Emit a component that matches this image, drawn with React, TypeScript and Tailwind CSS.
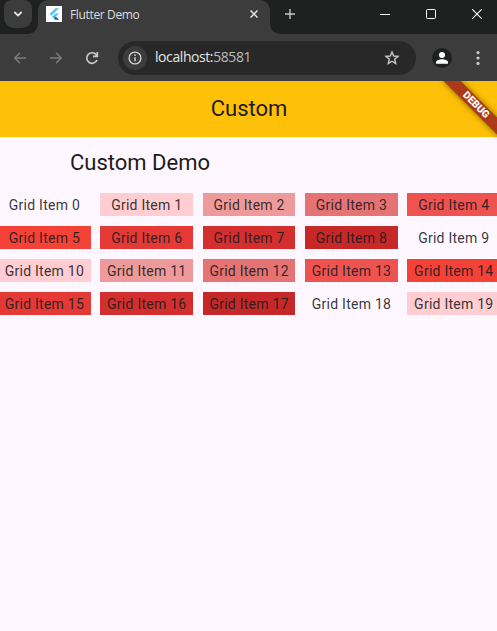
const shades = [
  'bg-transparent',
  'bg-[#ffcdd2]',
  'bg-[#ef9a9a]',
  'bg-[#e57373]',
  'bg-[#ef5350]',
  'bg-[#f44336]',
  'bg-[#e53935]',
  'bg-[#d32f2f]',
  'bg-[#c62828]',
];

function FlutterLogo() {
  return (
    <span className="flex h-4 w-4 shrink-0 items-center justify-center bg-white">
      <svg width="12" height="14" viewBox="0 0 12 14">
        <path d="M7.4 1.2H11L3.4 8.8L1.6 7Z" fill="#54c5f8" />
        <path d="M7.4 6.5H11L7.8 9.7L6 8Z" fill="#54c5f8" />
        <path d="M4.2 9.8L6 8L7.8 9.8L6 11.6Z" fill="#29b6f6" />
        <path d="M6 11.6L7.8 9.8L11 12.8H7.4Z" fill="#01579b" />
      </svg>
    </span>
  );
}

function TabStrip() {
  return (
    <div className="flex h-[34px]">
      <div className="w-[38px] shrink-0 rounded-br-[10px] bg-[#1f2120] pl-1">
        <div className="flex h-7 w-7 items-center justify-center rounded-t-[8px] rounded-b-[10px] bg-[#3c3c3c]">
          <svg width="10" height="6" viewBox="0 0 10 6" fill="none" stroke="#e8e8e8" strokeWidth="1.8">
            <path d="M1.4 1L5 4.6L8.6 1" />
          </svg>
        </div>
      </div>
      <div className="w-[232px] shrink-0 bg-[#1f2120]">
        <div className="flex h-full items-start rounded-t-[10px] bg-[#3c3c3c] pt-1.5 pl-2">
          <FlutterLogo />
          <span className="ml-2 w-[180px] font-['Open_Sans',sans-serif] text-[12px] leading-[18px] tracking-[-0.35px] text-[#dedede]">
            Flutter Demo
          </span>
          <svg className="mt-1" width="8" height="8" viewBox="0 0 8 8" stroke="#e3e3e3" strokeWidth="1.5">
            <path d="M0.5 0.5L7.5 7.5M7.5 0.5L0.5 7.5" />
          </svg>
        </div>
      </div>
      <div className="flex flex-1 items-start rounded-bl-[10px] bg-[#1f2120] pt-[9px] pl-[15px]">
        <svg width="10" height="10" viewBox="0 0 10 10" stroke="#c7c7c7" strokeWidth="1.4">
          <path d="M5 0V10M0 5H10" />
        </svg>
        <svg className="ml-[85px]" width="10" height="10" viewBox="0 0 10 10" stroke="#ffffff">
          <path d="M0 5.5H10" />
        </svg>
        <svg className="ml-9" width="10" height="10" viewBox="0 0 10 10" fill="none" stroke="#ffffff">
          <rect x="0.5" y="0.5" width="9" height="9" rx="1" />
        </svg>
        <svg className="ml-9" width="10" height="10" viewBox="0 0 10 10" stroke="#ffffff" strokeWidth="1.1">
          <path d="M0 0L10 10M10 0L0 10" />
        </svg>
      </div>
    </div>
  );
}

function Toolbar() {
  return (
    <div className="flex h-[47px] items-center pl-3">
      <svg width="16" height="16" viewBox="0 0 16 16" fill="none" stroke="#7d7d7d" strokeWidth="1.5">
        <path d="M14 8H3.2M8 2.8L2.8 8L8 13.2" />
      </svg>
      <svg className="ml-5" width="16" height="16" viewBox="0 0 16 16" fill="none" stroke="#7d7d7d" strokeWidth="1.5">
        <path d="M2 8H12.8M8 2.8L13.2 8L8 13.2" />
      </svg>
      <svg className="ml-5" width="16" height="16" viewBox="0 0 16 16" fill="none" stroke="#c9c9c9" strokeWidth="1.7">
        <path d="M13 10A5.3 5.3 0 1 1 12.2 4.7L13.2 5.8M13.3 2V6.4H9" />
      </svg>
      <div className="ml-[18px] flex h-[34px] w-[298px] shrink-0 items-center rounded-full bg-[#282828] pl-[5px]">
        <span className="flex h-6 w-6 items-center justify-center rounded-full bg-[#3c3c3c]">
          <svg width="14" height="14" viewBox="0 0 14 14" fill="none" stroke="#d5d5d5" strokeWidth="1.3">
            <circle cx="7" cy="7" r="5.9" />
            <path d="M7 6.2V10.2M7 3.6V5" strokeWidth="1.5" />
          </svg>
        </span>
        <span className="ml-2 w-[229px] pb-px font-['Open_Sans',sans-serif] text-[14px] leading-5 tracking-[-0.42px] text-[#e5e5e5]">
          localhost:<span className="text-[#bdbdbd]">58581</span>
        </span>
        <svg width="16" height="16" viewBox="0 0 16 16" fill="none" stroke="#c9c9c9" strokeWidth="1.4">
          <path d="M8 2L9.7 6L14 6.4L10.7 9.2L11.7 13.5L8 11.2L4.3 13.5L5.3 9.2L2 6.4L6.3 6Z" />
        </svg>
      </div>
      <svg className="ml-4" width="20" height="20" viewBox="0 0 20 20">
        <circle cx="10" cy="10" r="10" fill="#1f2120" />
        <circle cx="10" cy="7" r="3" fill="#ffffff" />
        <path d="M4 15V14.2C4 12.2 7.5 11.2 10 11.2S16 12.2 16 14.2V15.8H4Z" fill="#ffffff" />
      </svg>
      <svg className="ml-[24px]" width="4" height="14" viewBox="0 0 4 14" fill="#c9c9c9">
        <circle cx="2" cy="1.6" r="1.6" />
        <circle cx="2" cy="7" r="1.6" />
        <circle cx="2" cy="12.4" r="1.6" />
      </svg>
    </div>
  );
}

export default function App() {
  return (
    <div className="flex h-[631px] w-[497px] flex-col overflow-hidden bg-[#3c3c3c]">
      <TabStrip />
      <Toolbar />
      <main className="relative flex-1 overflow-hidden bg-[#fef7ff] font-[Roboto,sans-serif] text-[#1d1b20]">
        <header className="flex h-14 items-center justify-center bg-[#ffc107] pl-px">
          <h1 className="text-[22px] leading-7">Custom</h1>
        </header>
        <h2 className="mt-3 ml-[70px] text-[22px] leading-7">Custom Demo</h2>
        <div className="mt-4 -ml-[2px] grid w-[501.95px] grid-cols-5 gap-x-[9.8px] gap-y-[10px]">
          {Array.from({ length: 20 }, (_, i) => (
            <div
              key={i}
              className={`flex h-[23.1px] items-center justify-center pl-[0.3px] text-[14px] leading-5 tracking-[0.25px] whitespace-nowrap text-[#1d1b20]/90 ${shades[i % 9]}`}
            >
              Grid Item {i}
            </div>
          ))}
        </div>
        <div className="absolute top-[18px] left-[436px] flex h-3 w-20 rotate-45 items-center justify-center bg-[#ac3a18] text-[10.2px] leading-none font-black text-white shadow-[0_0_6px_rgba(0,0,0,0.5)]">
          DEBUG
        </div>
      </main>
    </div>
  );
}
